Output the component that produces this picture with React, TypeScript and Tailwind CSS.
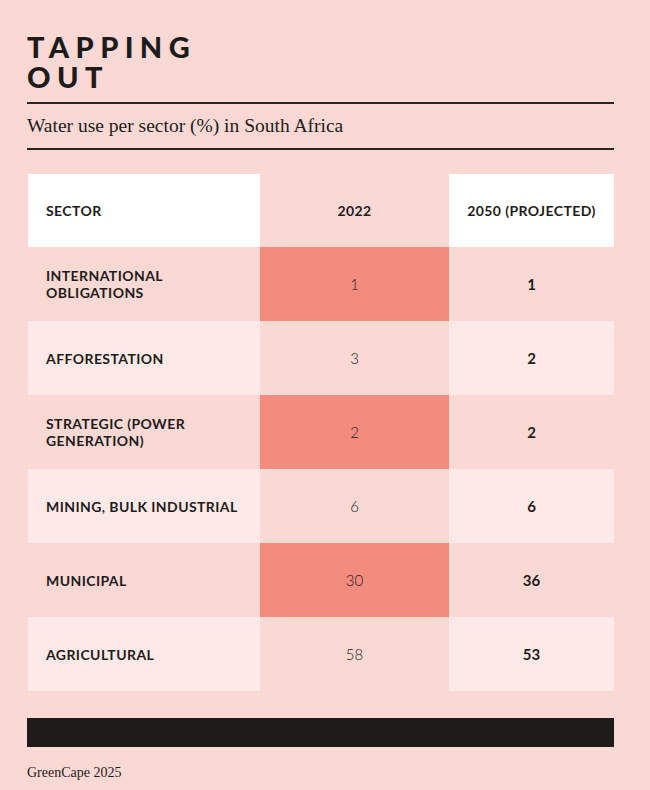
const ROWS = [
  { sector: ["INTERNATIONAL", "OBLIGATIONS"], y2022: "1", y2050: "1" },
  { sector: ["AFFORESTATION"], y2022: "3", y2050: "2" },
  { sector: ["STRATEGIC (POWER", "GENERATION)"], y2022: "2", y2050: "2" },
  { sector: ["MINING, BULK INDUSTRIAL"], y2022: "6", y2050: "6" },
  { sector: ["MUNICIPAL"], y2022: "30", y2050: "36" },
  { sector: ["AGRICULTURAL"], y2022: "58", y2050: "53" },
];

const sans = { fontFamily: "Lato, 'Noto Sans', sans-serif" };
const serif = { fontFamily: "'Liberation Serif', 'DejaVu Serif', serif" };

export default function App() {
  return (
    <div className="w-[650px] h-[790px] bg-[#fad9d5] pl-[27px] pr-[36px] pt-[32px] text-[#1e1c1a]">
      {/* Title */}
      <h1 className="text-[29px] font-black tracking-[0.22em] uppercase" style={sans}>
        <div className="h-[30px] leading-[30px]">Tapping</div>
        <div className="h-[30px] leading-[30px]">Out</div>
      </h1>

      <div className="mt-[10px] border-t-2 border-[#2a2624]" />
      <div className="h-[44px] flex items-center text-[19.5px]" style={serif}>
        Water use per sector (%) in South Africa
      </div>
      <div className="border-t-2 border-[#2a2624]" />

      {/* Table */}
      <div className="mt-[24px] ml-[1px]" style={sans}>
        <div className="grid grid-cols-[232px_189px_165px] h-[73px] text-[14px] tracking-[0.03em] font-bold">
          <div className="bg-white flex items-center pl-[18px]">SECTOR</div>
          <div className="flex items-center justify-center">2022</div>
          <div className="bg-white flex items-center justify-center">2050 (PROJECTED)</div>
        </div>
        {ROWS.map((r, i) => {
          const odd = i % 2 === 0;
          return (
            <div key={i} className="grid grid-cols-[232px_189px_165px] h-[74px]">
              <div
                className={`flex flex-col justify-center pl-[18px] text-[14px] tracking-[0.03em] font-bold leading-[17px] ${
                  odd ? "bg-[#fad9d5]" : "bg-[#fdeae8]"
                }`}
              >
                {r.sector.map((s) => (
                  <span key={s}>{s}</span>
                ))}
              </div>
              <div
                className={`flex items-center justify-center text-[15px] font-light ${
                  odd ? "bg-[#f38b7e]" : "bg-[#fad9d5]"
                }`}
              >
                {r.y2022}
              </div>
              <div
                className={`flex items-center justify-center text-[15px] font-bold ${
                  odd ? "bg-[#fad9d5]" : "bg-[#fdeae8]"
                }`}
              >
                {r.y2050}
              </div>
            </div>
          );
        })}
      </div>

      <div className="mt-[27px] h-[29px] bg-[#1e1c1a]" />
      <div className="mt-[15px] text-[14px]" style={serif}>
        GreenCape 2025
      </div>
    </div>
  );
}
